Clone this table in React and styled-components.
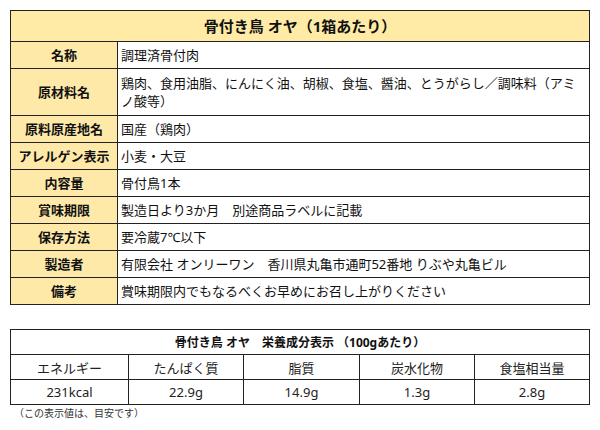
import React from 'react';
import styled, { createGlobalStyle } from 'styled-components';

const GlobalStyle = createGlobalStyle`
    html, body {
        margin: 0;
        padding: 0;
        background: #fff;
    }
    body {
        font-family: "Noto Sans", "Noto Sans CJK JP", sans-serif;
        color: #111;
    }
`;

const Page = styled.div`
    width: 580px;
    padding: 10px;
`;

const SpecTable = styled.div`
    display: grid;
    grid-template-columns: 107px 472px;
    border-top: 1px solid #222;
    border-left: 1px solid #222;
`;

const Cell = styled.div`
    box-sizing: border-box;
    border-right: 1px solid #222;
    border-bottom: 1px solid #222;
    display: flex;
    align-items: center;
    font-size: 13px;
    line-height: 18px;
    height: ${props => props.tall ? '47px' : '27px'};
`;

const Title = styled(Cell)`
    grid-column: 1 / span 2;
    height: 31px;
    justify-content: center;
    background: #ffeba6;
    font-size: 15px;
    font-weight: bold;
`;

const Label = styled(Cell)`
    justify-content: center;
    background: #fee9a9;
    font-weight: bold;
`;

const Value = styled(Cell)`
    padding: 0 4px 0 3px;
    background: #fff;
`;

const NutritionTable = styled.div`
    margin-top: 24px;
    display: grid;
    grid-template-columns: 118px 115px 116px 115px 115px;
    border-top: 1px solid #222;
    border-left: 1px solid #222;
`;

const NutriCell = styled.div`
    box-sizing: border-box;
    height: 25px;
    border-right: 1px solid #222;
    border-bottom: 1px solid #222;
    display: flex;
    align-items: center;
    justify-content: center;
    font-size: 13px;
    color: #222;
`;

const NutriTitle = styled(NutriCell)`
    grid-column: 1 / span 5;
    font-size: 12px;
    font-weight: bold;
    color: #111;
`;

const Note = styled.div`
    margin-top: 1px;
    padding-left: 4px;
    font-size: 10px;
    line-height: 14px;
    color: #333;
`;

const specs = [
    ['名称', '調理済骨付肉'],
    ['原材料名', '鶏肉、食用油脂、にんにく油、胡椒、食塩、醤油、とうがらし／調味料（アミノ酸等）', true],
    ['原料原産地名', '国産（鶏肉）'],
    ['アレルゲン表示', '小麦・大豆'],
    ['内容量', '骨付鳥1本'],
    ['賞味期限', '製造日より3か月　別途商品ラベルに記載'],
    ['保存方法', '要冷蔵7℃以下'],
    ['製造者', '有限会社 オンリーワン　香川県丸亀市通町52番地 りぶや丸亀ビル'],
    ['備考', '賞味期限内でもなるべくお早めにお召し上がりください'],
];

const nutrients = [
    ['エネルギー', '231kcal'],
    ['たんぱく質', '22.9g'],
    ['脂質', '14.9g'],
    ['炭水化物', '1.3g'],
    ['食塩相当量', '2.8g'],
];

const App = () => {
    return (
        <Page>
            <GlobalStyle />
            <SpecTable>
                <Title>骨付き鳥 オヤ（1箱あたり）</Title>
                {specs.map(([label, value, tall]) => (
                    <React.Fragment key={label}>
                        <Label tall={tall}>{label}</Label>
                        <Value tall={tall}>{value}</Value>
                    </React.Fragment>
                ))}
            </SpecTable>

            <NutritionTable>
                <NutriTitle>骨付き鳥 オヤ　栄養成分表示 （100gあたり）</NutriTitle>
                {nutrients.map(([name]) => (
                    <NutriCell key={name}>{name}</NutriCell>
                ))}
                {nutrients.map(([name, amount]) => (
                    <NutriCell key={name + '-v'}>{amount}</NutriCell>
                ))}
            </NutritionTable>
            <Note>（この表示値は、目安です）</Note>
        </Page>
    );
};

export default App;
